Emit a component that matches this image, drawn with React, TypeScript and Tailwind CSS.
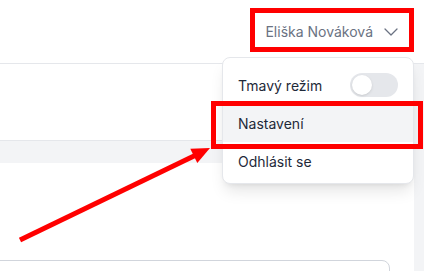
import React, { useState } from 'react';
import { ChevronDown } from 'lucide-react';

const App: React.FC = () => {
  const [dark, setDark] = useState(false);

  return (
    <div className="relative w-[424px] h-[271px] overflow-hidden bg-white font-['Inter',sans-serif]">
      {/* header */}
      <header className="h-[64px] flex items-center justify-end border-b border-gray-200 bg-white pr-[21px]">
        <button className="flex items-center gap-[6px] text-[14px] text-gray-500">
          <span>Eliška Nováková</span>
          <ChevronDown size={24} strokeWidth={1.25} className="text-gray-500" />
        </button>
      </header>

      {/* page body */}
      <div className="flex h-[207px] overflow-hidden">
        <main className="flex-1 flex flex-col">
          <div className="h-[76px] shrink-0" />
          <div className="h-[23px] shrink-0 bg-gray-100 border-t border-gray-200" />
          <div className="h-[97px] shrink-0" />
          <div className="shrink-0 ml-[-10px] w-[400px] h-[40px] border border-gray-300 rounded-tr-lg" />
        </main>
        <div className="w-[10px] bg-gray-100" />
      </div>

      {/* user menu */}
      <div className="absolute left-[222px] top-[57px] w-[192px] rounded-lg border border-gray-200 bg-white shadow-lg pt-[8px] pb-[3px]">
        <div className="h-[38px] flex items-center justify-between pl-[15px] pr-[15px] text-[14px] text-gray-800">
          <span>Tmavý režim</span>
          <button
            onClick={() => setDark(!dark)}
            className="w-[48px] h-[24px] rounded-full bg-gray-200 p-[2px] flex items-center"
          >
            <span className="w-[20px] h-[20px] rounded-full bg-white shadow" />
          </button>
        </div>
        <div className="h-[38px] flex items-center pl-[15px] bg-gray-100 text-[14px] text-gray-800">
          Nastavení
        </div>
        <div className="h-[38px] flex items-center pl-[15px] text-[14px] text-gray-800">
          Odhlásit se
        </div>
      </div>

      {/* annotations */}
      <div className="absolute left-[250px] top-[8px] w-[164px] h-[44px] border-[5px] border-[#ff0000]" />
      <div className="absolute left-[211px] top-[101px] w-[212px] h-[48px] border-[5px] border-[#ff0000]" />
      <svg className="absolute left-0 top-0" width="424" height="271" viewBox="0 0 424 271">
        <line x1="20" y1="240" x2="195" y2="155.5" stroke="#ff0000" strokeWidth="5" />
        <polygon points="210,148 190.3,148.7 197.3,163.1" fill="#ff0000" />
      </svg>
    </div>
  );
};

export default App;
